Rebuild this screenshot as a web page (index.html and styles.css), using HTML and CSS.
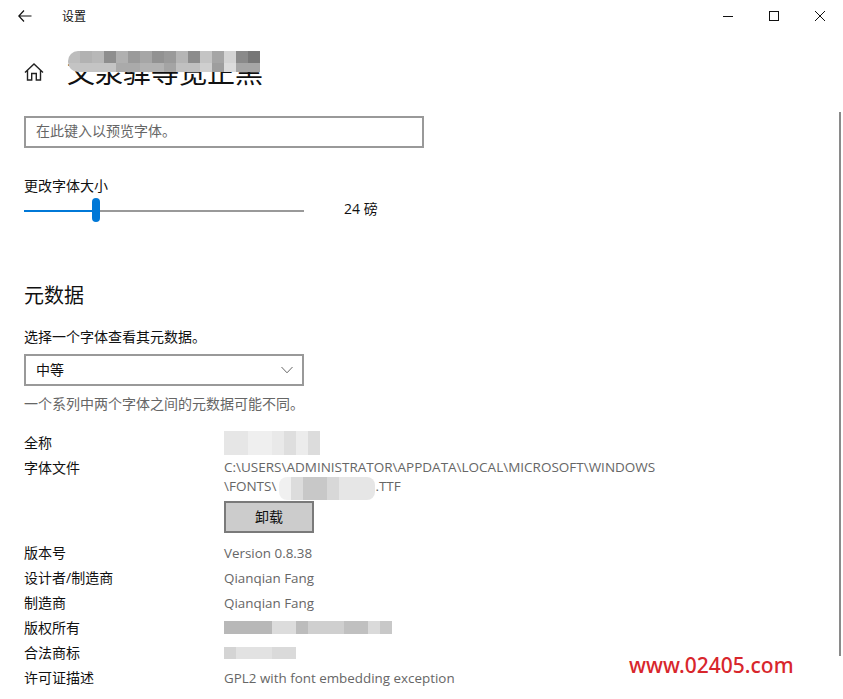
FILE: index.html
```html
<!DOCTYPE html>
<html lang="zh-CN">
<head>
    <meta charset="UTF-8">
    <meta name="viewport" content="width=device-width, initial-scale=1.0">
    <title>设置</title>
    <link rel="stylesheet" href="styles.css">
</head>
<body>
    <div class="titlebar">
        <svg class="back-icon" width="14" height="12" viewBox="0 0 14 12"><path d="M6 .5 .8 6 6 11.5M.8 6H13.5" fill="none" stroke="#111" stroke-width="1.2"/></svg>
        <span class="app-name">设置</span>
        <div class="win-buttons">
            <svg width="12" height="12" viewBox="0 0 12 12"><path d="M1 6.5H11" stroke="#111" stroke-width="1"/></svg>
            <svg width="12" height="12" viewBox="0 0 12 12"><rect x="1.5" y="1.5" width="9" height="9" fill="none" stroke="#111" stroke-width="1"/></svg>
            <svg width="12" height="12" viewBox="0 0 12 12"><path d="M1 1 11 11M11 1 1 11" stroke="#111" stroke-width="1"/></svg>
        </div>
    </div>

    <div class="heading-row">
        <svg class="home-icon" width="20" height="20" viewBox="0 0 20 20"><path d="M1 10.5 10 2l9 8.5M3.5 8.5V18h4.2v-6.5h4.6V18h4.2V8.5" fill="none" stroke="#222" stroke-width="1.4"/></svg>
        <h1 class="font-name">文泉驿等宽正黑<span class="mosaic mosaic-title"></span></h1>
    </div>

    <div class="preview-box">在此键入以预览字体。</div>

    <div class="size-label">更改字体大小</div>
    <div class="size-row">
        <div class="slider">
            <div class="slider-fill"></div>
            <div class="slider-thumb"></div>
        </div>
        <span class="size-value">24 磅</span>
    </div>

    <h2 class="section-title">元数据</h2>
    <div class="choose-label">选择一个字体查看其元数据。</div>
    <div class="select-box">
        <span>中等</span>
        <svg width="12" height="8" viewBox="0 0 12 8"><path d="M.5 1 6 6.8 11.5 1" fill="none" stroke="#666" stroke-width="1"/></svg>
    </div>
    <div class="note">一个系列中两个字体之间的元数据可能不同。</div>

    <div class="meta-table">
        <div class="meta-key">全称</div>
        <div class="meta-val"><span class="mosaic mosaic-fullname"></span></div>
        <div class="meta-key">字体文件</div>
        <div class="meta-val">
            <div class="file-path">C:\USERS\ADMINISTRATOR\APPDATA\LOCAL\MICROSOFT\WINDOWS<br>\FONTS\<span class="mosaic mosaic-file"></span>.TTF</div>
            <button class="remove-btn">卸载</button>
        </div>
        <div class="meta-key">版本号</div>
        <div class="meta-val">Version 0.8.38</div>
        <div class="meta-key">设计者/制造商</div>
        <div class="meta-val">Qianqian Fang</div>
        <div class="meta-key">制造商</div>
        <div class="meta-val">Qianqian Fang</div>
        <div class="meta-key">版权所有</div>
        <div class="meta-val"><span class="mosaic mosaic-copyright"></span></div>
        <div class="meta-key">合法商标</div>
        <div class="meta-val"><span class="mosaic mosaic-trademark"></span></div>
        <div class="meta-key">许可证描述</div>
        <div class="meta-val">GPL2 with font embedding exception</div>
    </div>

    <div class="scrollbar"></div>
    <div class="watermark">www.02405.com</div>
</body>
</html>
```

FILE: styles.css
```css
html, body { height: 100%; }
body { margin: 0; padding: 0 0 0 24px; background: #fff; color: #111; overflow: hidden; position: relative;
       font-family: "Open Sans", "Noto Sans CJK SC", sans-serif; font-size: 14px; line-height: 20px; }

.titlebar { display: flex; align-items: center; height: 32px; margin-left: -24px; padding-left: 18px; }
.back-icon { margin-right: 30px; }
.app-name { font-size: 12px; margin-top: 2px; }
.win-buttons { display: flex; gap: 34px; margin-left: auto; margin-right: 17px; }

.heading-row { display: flex; align-items: center; height: 40px; margin-top: 20px; }
.home-icon { margin-right: 23px; }
.font-name { position: relative; margin: 0; font-size: 28px; font-weight: 400; line-height: 40px; }

.mosaic { display: inline-block; vertical-align: top; }
.mosaic-title { position: absolute; left: 1px; top: -1px; width: 192px; height: 21px; border-radius: 10px 0 0 10px;
    background:
        linear-gradient(90deg, #bdbdbd 0 12px, #b2b2b2 0 24px, #b8b8b8 0 36px, #8e8e8e 0 48px, #b0b0b0 0 60px, #9a9a9a 0 72px, #a6a6a6 0 84px, #929292 0 96px, #9a9a9a 0 108px, #b5b5b5 0 120px, #8c8c8c 0 132px, #c4c4c4 0 144px, #a5a5a5 0 156px, #d4d4d4 0 168px, #8a8a8a 0 180px, #777 0 192px) top / 100% 12px no-repeat,
        linear-gradient(90deg, #c4c4c4 0 48px, #aaa 0 72px, #b2b2b2 0 96px, #a4a4a4 0 108px, #c0c0c0 0 132px, #cfcfcf 0 144px, #9e9e9e 0 156px, #dcdcdc 0 168px, #a6a6a6 0 192px) bottom / 100% 9px no-repeat; }
.mosaic-fullname { width: 96px; height: 24px; margin-top: -2px;
    background: linear-gradient(90deg, #e6e6e6 0 24px, #efefef 0 48px, #e9e9e9 0 60px, #dedede 0 72px, #ececec 0 84px, #dcdcdc 0 96px); }
.mosaic-file { width: 96px; height: 23px; margin: 0 0 -4px 3px; border-radius: 8px;
    background: linear-gradient(90deg, #f0f0f0 0 12px, #dcdcdc 0 24px, #c8c8c8 0 48px, #d8d8d8 0 60px, #e6e6e6 0 96px); }
.mosaic-copyright { width: 168px; height: 13px; margin-top: 3px;
    background: linear-gradient(90deg, #b8b8b8 0 48px, #dcdcdc 0 72px, #bcbcbc 0 84px, #cfcfcf 0 120px, #c0c0c0 0 144px, #dadada 0 156px, #c8c8c8 0 168px); }
.mosaic-trademark { width: 72px; height: 12px; margin-top: 4px;
    background: linear-gradient(90deg, #d4d4d4 0 12px, #e2e2e2 0 48px, #dadada 0 72px); }

.preview-box { box-sizing: border-box; width: 400px; height: 32px; margin-top: 24px; padding: 0 10px;
               border: 2px solid #999; color: #666; line-height: 26px; }

.size-label { margin-top: 28px; }
.size-row { display: flex; align-items: center; height: 28px; margin-top: 1px; }
.slider { position: relative; width: 280px; height: 2px; margin-top: -1px; background: #999; }
.slider-fill { width: 72px; height: 2px; background: #0078d7; }
.slider-thumb { position: absolute; left: 68px; top: -12px; width: 8px; height: 24px; border-radius: 4px; background: #0078d7; }
.size-value { margin-left: 40px; margin-top: -4px; }

.section-title { margin: 57px 0 0; font-size: 20px; font-weight: 400; line-height: 28px; }
.choose-label { margin-top: 17px; }
.select-box { display: flex; align-items: center; justify-content: space-between; box-sizing: border-box;
              width: 280px; height: 32px; margin-top: 7px; padding: 0 9px 0 10px; border: 2px solid #999; }
.note { margin-top: 8px; color: #666; }

.meta-table { display: grid; grid-template-columns: 200px 1fr; grid-auto-rows: minmax(25px, auto); margin-top: 19px; }
.meta-val { color: #666; font-size: 13.4px; }
.file-path { font-size: 13.5px; line-height: 19px; }
.remove-btn { display: block; box-sizing: border-box; width: 90px; height: 32px; margin: 5px 0 10px; padding: 0;
              border: 2px solid #7a7a7a; background: #ccc; color: #111; font: inherit; font-size: 14px; }

.scrollbar { position: absolute; left: 839px; top: 112px; width: 2px; height: 544px; background: #8a8a8a; }
.watermark { position: absolute; left: 629px; top: 651px; color: #d8262c; font-size: 21px; line-height: 28px; font-weight: 500;
             font-family: "Noto Sans", sans-serif; }
```
